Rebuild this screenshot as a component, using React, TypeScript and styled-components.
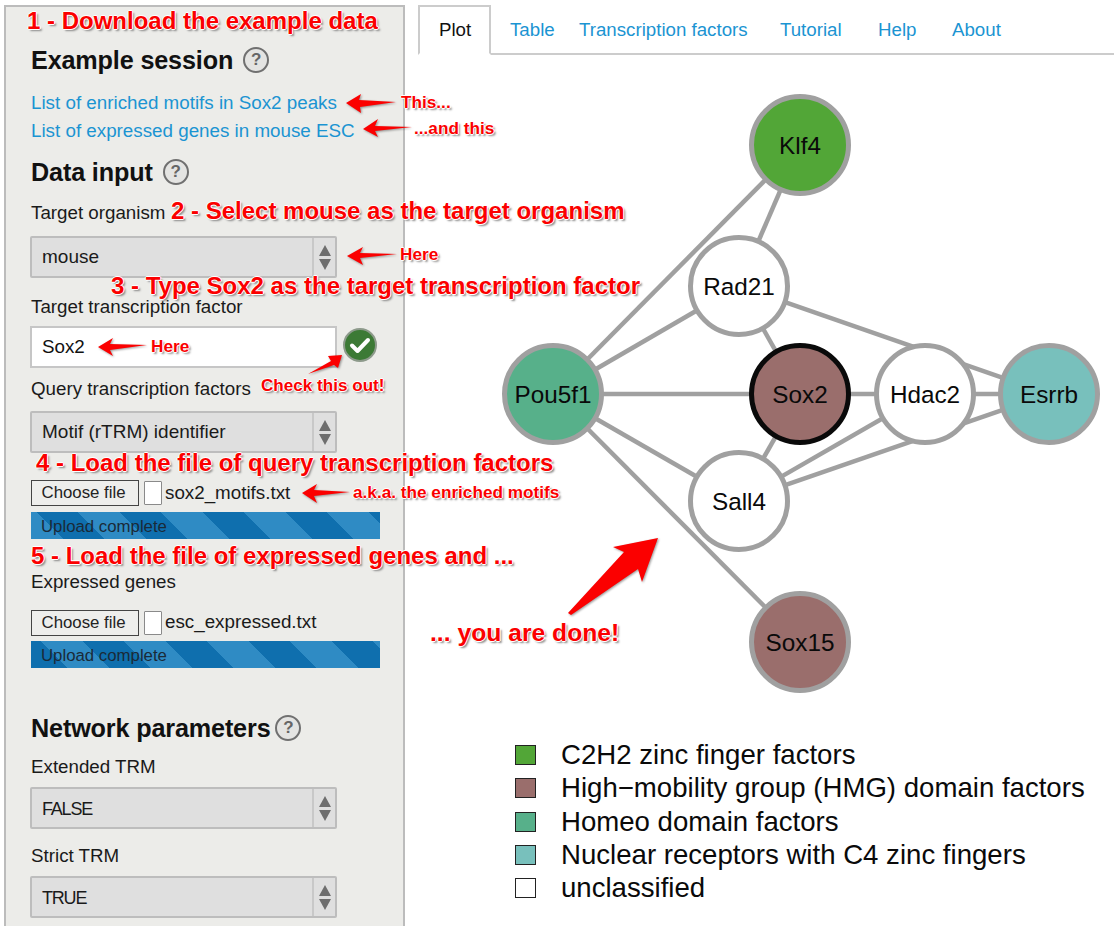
import styled, { createGlobalStyle } from "styled-components";

const GlobalStyle = createGlobalStyle`
  html, body {
    margin: 0;
    height: 926px;
    overflow: hidden;
    background: #fff;
    font-family: "Liberation Sans", Arial, sans-serif;
    color: #111;
  }
  #root { height: 926px; }
`;

const RED = "#fb0000";

const Page = styled.div`
  position: relative;
  display: flex;
  height: 926px;
  padding: 5px 0 0 4px;
  box-sizing: border-box;
`;

const Panel = styled.aside`
  width: 401px;
  flex: none;
  box-sizing: border-box;
  padding: 38px 0 0 25px;
  background: #ecece9;
  border: 2px solid #bcbcbc;
  border-bottom: none;
`;

const Heading = styled.h3<{ $mt?: number; $gap?: number }>`
  display: flex;
  align-items: center;
  gap: ${(p) => p.$gap || 10}px;
  margin: ${(p) => p.$mt || 0}px 0 0;
  height: 30px;
  font-size: 25.2px;
  font-weight: 700;
  letter-spacing: -0.15px;
`;

const Help = styled.span`
  display: inline-flex;
  align-items: center;
  justify-content: center;
  width: 22px;
  height: 22px;
  border: 2px solid #707070;
  border-radius: 50%;
  background: #e4e4e2;
  color: #666;
  font-size: 17px;
  font-weight: 700;
  letter-spacing: 0;
`;

const Links = styled.div`
  margin-top: 14px;
`;

const DocLink = styled.a`
  display: block;
  height: 28px;
  line-height: 28px;
  font-size: 18.8px;
  color: #1b94d2;
  text-decoration: none;
`;

const Label = styled.div<{ $mt: number }>`
  margin-top: ${(p) => p.$mt}px;
  height: 20px;
  line-height: 20px;
  font-size: 18.75px;
  color: #1a1a1a;
`;

const SelectBox = styled.div<{ $mt: number }>`
  display: flex;
  margin: ${(p) => p.$mt}px 0 0 -1px;
  width: 307px;
  height: 42px;
  box-sizing: border-box;
  background: #dfdfdf;
  border: 2px solid #bdbdbd;
  border-radius: 2px;
`;

const SelectValue = styled.div<{ $caps?: boolean }>`
  flex: 1;
  padding-left: 10px;
  line-height: ${(p) => (p.$caps ? 40 : 38)}px;
  font-size: ${(p) => (p.$caps ? 18 : 19)}px;
  letter-spacing: ${(p) => (p.$caps ? -1.2 : 0)}px;
  color: #1a1a1a;
`;

const Stepper = styled.div`
  display: flex;
  flex-direction: column;
  align-items: center;
  justify-content: center;
  gap: 3px;
  width: 21px;
  border-left: 2px solid #c8c8c8;
`;

const Triangle = styled.span<{ $down?: boolean }>`
  width: 0;
  height: 0;
  border-left: 6px solid transparent;
  border-right: 6px solid transparent;
  ${(p) => (p.$down ? "border-top" : "border-bottom")}: 11px solid #6e6e6e;
`;

const InputRow = styled.div`
  display: flex;
  align-items: center;
  gap: 6px;
  margin: 9px 0 0 -1px;
`;

const TextBox = styled.div`
  width: 307px;
  height: 42px;
  box-sizing: border-box;
  padding-left: 10px;
  line-height: 38px;
  font-size: 18.8px;
  background: #fff;
  border: 2px solid #c6c6c6;
`;

const CheckBadge = styled.div`
  display: flex;
  align-items: center;
  justify-content: center;
  width: 34px;
  height: 34px;
  box-sizing: border-box;
  margin-top: -4px;
  border-radius: 50%;
  background: #3c7a35;
  border: 2px solid #8d9a8b;
`;

const FileRow = styled.div<{ $mt: number }>`
  display: flex;
  align-items: center;
  margin-top: ${(p) => p.$mt}px;
  height: 26px;
`;

const ChooseFile = styled.button`
  width: 108px;
  height: 26px;
  padding: 0 3px 0 0;
  box-sizing: border-box;
  background: #eeeeec;
  border: 1px solid #444;
  border-radius: 0;
  font-family: inherit;
  font-size: 16.8px;
  color: #222;
`;

const FileTick = styled.span`
  width: 16px;
  height: 22px;
  margin-left: 5px;
  background: #fff;
  border: 1px solid #8a8a8a;
  border-radius: 1px;
`;

const FileName = styled.span<{ $lift?: number }>`
  margin: 0 0 ${(p) => p.$lift || 0}px 3px;
  font-size: 18.8px;
  color: #1a1a1a;
`;

const Progress = styled.div<{ $mt: number; $offset: number }>`
  margin-top: ${(p) => p.$mt}px;
  width: 349px;
  height: 27px;
  box-sizing: border-box;
  padding-left: 10px;
  line-height: 30px;
  font-size: 16.8px;
  color: #1a2a38;
  background-color: #0f6fae;
  background-image: linear-gradient(
    45deg,
    #2f8bc4 25%,
    transparent 25%,
    transparent 50%,
    #2f8bc4 50%,
    #2f8bc4 75%,
    transparent 75%,
    transparent
  );
  background-size: 83px 83px;
  background-position: ${(p) => p.$offset}px 0;
`;

const Main = styled.main`
  flex: 1;
  min-width: 0;
  padding-left: 13px;
`;

const TabBar = styled.nav`
  display: flex;
  align-items: stretch;
  height: 50px;
  box-sizing: border-box;
  border-bottom: 2px solid #ccc;
`;

const Tab = styled.a<{ $active?: boolean; $width: number; $indent?: number }>`
  flex: none;
  box-sizing: border-box;
  width: ${(p) => p.$width}px;
  margin-bottom: ${(p) => (p.$active ? -2 : 0)}px;
  padding-left: ${(p) => p.$indent || 0}px;
  line-height: ${(p) => (p.$active ? 46 : 50)}px;
  font-size: 18.7px;
  color: ${(p) => (p.$active ? "#111" : "#1b94d2")};
  background: #fff;
  ${(p) =>
    p.$active
      ? `border: 2px solid #ccc; border-bottom-color: #fff;`
      : ""}
`;

const Graph = styled.svg`
  display: block;
  width: 696px;
  height: 680px;
`;

const NodeLabel = styled.text`
  font-family: "Liberation Sans", Arial, sans-serif;
  font-size: 24.3px;
  fill: #0a0a0a;
  text-anchor: middle;
  dominant-baseline: central;
`;

const Legend = styled.ul`
  list-style: none;
  margin: 3.5px 0 0 97px;
  padding: 0;
`;

const LegendRow = styled.li`
  display: flex;
  align-items: center;
  height: 33.3px;
  font-size: 27.6px;
  color: #0a0a0a;
`;

const Swatch = styled.span<{ $color: string }>`
  width: 19px;
  height: 18px;
  margin-right: 25px;
  background: ${(p) => p.$color};
  border: 1px solid #222;
`;

const Marks = styled.svg`
  position: absolute;
  left: 0;
  top: 0;
  width: 1114px;
  height: 926px;
  pointer-events: none;
  overflow: visible;
  filter: drop-shadow(1px 1px 1px rgba(0, 0, 0, 0.4));
`;

const Note = styled.div<{ $x: number; $y: number; $size: number }>`
  position: absolute;
  left: ${(p) => p.$x}px;
  top: ${(p) => p.$y - 15}px;
  height: 30px;
  line-height: 30px;
  white-space: nowrap;
  font-size: ${(p) => p.$size}px;
  font-weight: 700;
  color: ${RED};
  text-shadow: 1px 0 0 #fff, -1px 0 0 #fff, 0 1px 0 #fff, 0 -1px 0 #fff,
    2px 2px 2px #8a8a8a;
`;

const nodes = [
  { name: "Klf4", x: 800, y: 145, fill: "#52a637", stroke: "#a0a0a0" },
  { name: "Rad21", x: 739, y: 286, fill: "#fff", stroke: "#a0a0a0" },
  { name: "Pou5f1", x: 553, y: 394, fill: "#57b08a", stroke: "#a0a0a0" },
  { name: "Sox2", x: 800, y: 394, fill: "#9a6e6c", stroke: "#0a0a0a" },
  { name: "Hdac2", x: 925, y: 394, fill: "#fff", stroke: "#a0a0a0" },
  { name: "Esrrb", x: 1049, y: 394, fill: "#78c0bc", stroke: "#a0a0a0" },
  { name: "Sall4", x: 739, y: 501, fill: "#fff", stroke: "#a0a0a0" },
  { name: "Sox15", x: 800, y: 642, fill: "#9a6e6c", stroke: "#a0a0a0" },
];

const edges = [
  ["Pou5f1", "Klf4"],
  ["Rad21", "Klf4"],
  ["Pou5f1", "Rad21"],
  ["Rad21", "Sox2"],
  ["Rad21", "Esrrb"],
  ["Pou5f1", "Esrrb"],
  ["Pou5f1", "Sall4"],
  ["Pou5f1", "Sox15"],
  ["Sall4", "Sox2"],
  ["Sall4", "Hdac2"],
  ["Sall4", "Esrrb"],
];

const legend = [
  { color: "#52a637", label: "C2H2 zinc finger factors" },
  { color: "#9a6e6c", label: "High\u2212mobility group (HMG) domain factors" },
  { color: "#57b08a", label: "Homeo domain factors" },
  { color: "#78c0bc", label: "Nuclear receptors with C4 zinc fingers" },
  { color: "#fff", label: "unclassified" },
];

const notes = [
  { text: "1 - Download the example data", x: 27, y: 21, size: 24 },
  { text: "This...", x: 401, y: 102, size: 17.2 },
  { text: "...and this", x: 414, y: 128, size: 17.2 },
  { text: "2 - Select mouse as the target organism", x: 171, y: 211, size: 24 },
  { text: "Here", x: 400, y: 254, size: 17.2 },
  { text: "3 - Type Sox2 as the target transcription factor", x: 111, y: 286, size: 24 },
  { text: "Here", x: 151, y: 346, size: 17.2 },
  { text: "Check this out!", x: 261, y: 386, size: 17.1 },
  { text: "4 - Load the file of query transcription factors", x: 36, y: 463, size: 24 },
  { text: "a.k.a. the enriched motifs", x: 353, y: 492, size: 17.2 },
  { text: "5 - Load the file of expressed genes and ...", x: 31, y: 556, size: 24 },
  { text: "... you are done!", x: 430, y: 633, size: 24.7 },
];

const arrows = [
  "346,103 361,94 359,100 396,102 360,107 361,113",
  "363,129 378,119 375,126 412,127 375,131 378,137",
  "347,256 363,247 360,253 397,254 360,258 363,265",
  "98,347 113,338 110,344 147,345 110,350 113,356",
  "342,355 328,356 331,361 308,374 334,365 338,368",
  "302,493 317,484 314,490 350,492 314,496 317,503",
  "658,538 613,547 624,552 568,613 571,615 638,569 642,582",
];

function Select(props: { value: string; mt: number; caps?: boolean }) {
  return (
    <SelectBox $mt={props.mt}>
      <SelectValue $caps={props.caps}>{props.value}</SelectValue>
      <Stepper>
        <Triangle />
        <Triangle $down />
      </Stepper>
    </SelectBox>
  );
}

function FileInput(props: { name: string; mt: number; lift?: number }) {
  return (
    <FileRow $mt={props.mt}>
      <ChooseFile>Choose file</ChooseFile>
      <FileTick />
      <FileName $lift={props.lift}>{props.name}</FileName>
    </FileRow>
  );
}

function App() {
  const byName = (name: string) => nodes.find((n) => n.name === name)!;

  return (
    <Page>
      <GlobalStyle />
      <Panel>
        <Heading>
          Example session <Help>?</Help>
        </Heading>
        <Links>
          <DocLink>List of enriched motifs in Sox2 peaks</DocLink>
          <DocLink>List of expressed genes in mouse ESC</DocLink>
        </Links>
        <Heading $mt={12}>
          Data input <Help>?</Help>
        </Heading>
        <Label $mt={16}>Target organism</Label>
        <Select value="mouse" mt={13} />
        <Label $mt={19}>Target transcription factor</Label>
        <InputRow>
          <TextBox>Sox2</TextBox>
          <CheckBadge>
            <svg width="22" height="18" viewBox="0 0 22 18">
              <path d="M3 9.5 L8.5 15 L19 4" fill="none" stroke="#fff" strokeWidth="4" strokeLinecap="round" strokeLinejoin="round" />
            </svg>
          </CheckBadge>
        </InputRow>
        <Label $mt={11}>Query transcription factors</Label>
        <Select value="Motif (rTRM) identifier" mt={12} />
        <FileInput name="sox2_motifs.txt" mt={27} />
        <Progress $mt={6} $offset={-36}>Upload complete</Progress>
        <Label $mt={33}>Expressed genes</Label>
        <FileInput name="esc_expressed.txt" mt={18} lift={3} />
        <Progress $mt={5} $offset={10}>Upload complete</Progress>
        <Heading $mt={45} $gap={5}>
          Network parameters <Help>?</Help>
        </Heading>
        <Label $mt={14}>Extended TRM</Label>
        <Select value="FALSE" mt={10} caps />
        <Label $mt={17}>Strict TRM</Label>
        <Select value="TRUE" mt={10} caps />
      </Panel>

      <Main>
        <TabBar>
          <Tab $active $width={73} $indent={19}>Plot</Tab>
          <Tab $width={88} $indent={19}>Table</Tab>
          <Tab $width={201}>Transcription factors</Tab>
          <Tab $width={98}>Tutorial</Tab>
          <Tab $width={74}>Help</Tab>
          <Tab $width={60}>About</Tab>
        </TabBar>
        <Graph viewBox="418 55 696 680">
          {edges.map(([a, b]) => (
            <line
              key={a + b}
              x1={byName(a).x}
              y1={byName(a).y}
              x2={byName(b).x}
              y2={byName(b).y}
              stroke="#a0a0a0"
              strokeWidth="4.5"
            />
          ))}
          {nodes.map((n) => (
            <g key={n.name}>
              <circle cx={n.x} cy={n.y} r="48.5" fill={n.fill} stroke={n.stroke} strokeWidth="5" />
              <NodeLabel x={n.x} y={n.y}>{n.name}</NodeLabel>
            </g>
          ))}
        </Graph>
        <Legend>
          {legend.map((row) => (
            <LegendRow key={row.label}>
              <Swatch $color={row.color} />
              {row.label}
            </LegendRow>
          ))}
        </Legend>
      </Main>

      <Marks viewBox="0 0 1114 926">
        {arrows.map((points) => (
          <polygon key={points} points={points} fill={RED} />
        ))}
      </Marks>
      {notes.map((n) => (
        <Note key={n.text + n.x} $x={n.x} $y={n.y} $size={n.size}>
          {n.text}
        </Note>
      ))}
    </Page>
  );
}

export default App;
